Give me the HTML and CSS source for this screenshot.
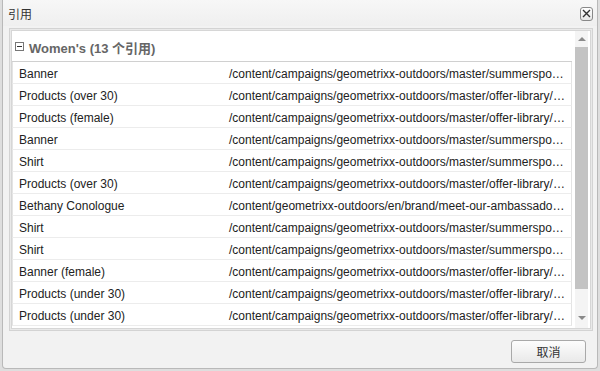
FILE: index.html
```html
<!DOCTYPE html>
<html lang="zh">
<head>
  <meta charset="UTF-8">
  <title>引用</title>
  <link rel="stylesheet" href="styles.css">
</head>
<body>
  <div class="dialog">
    <div class="dialog-header">
      <span class="dialog-title">引用</span>
      <button class="close-btn" aria-label="close">
        <svg width="9" height="9" viewBox="0 0 9 9"><path d="M1 1L8 8M8 1L1 8" stroke="#333" stroke-width="1.4"/></svg>
      </button>
    </div>
    <div class="dialog-body">
      <div class="panel">
        <div class="grid">
          <div class="rows">
            <div class="group-header">
              <span class="toggle"></span>
              <span>Women's (13 个引用)</span>
            </div>
            <div class="row"><span class="col-title">Banner</span><span class="col-path">/content/campaigns/geometrixx-outdoors/master/summersport-collection/banner</span></div>
            <div class="row"><span class="col-title">Products (over 30)</span><span class="col-path">/content/campaigns/geometrixx-outdoors/master/offer-library/products-over-30</span></div>
            <div class="row"><span class="col-title">Products (female)</span><span class="col-path">/content/campaigns/geometrixx-outdoors/master/offer-library/products-female</span></div>
            <div class="row"><span class="col-title">Banner</span><span class="col-path">/content/campaigns/geometrixx-outdoors/master/summersport-collection/banner-2</span></div>
            <div class="row"><span class="col-title">Shirt</span><span class="col-path">/content/campaigns/geometrixx-outdoors/master/summersport-collection/shirt</span></div>
            <div class="row"><span class="col-title">Products (over 30)</span><span class="col-path">/content/campaigns/geometrixx-outdoors/master/offer-library/products-over-30-2</span></div>
            <div class="row"><span class="col-title">Bethany Conologue</span><span class="col-path">/content/geometrixx-outdoors/en/brand/meet-our-ambassadors/bethany</span></div>
            <div class="row"><span class="col-title">Shirt</span><span class="col-path">/content/campaigns/geometrixx-outdoors/master/summersport-collection/shirt-2</span></div>
            <div class="row"><span class="col-title">Shirt</span><span class="col-path">/content/campaigns/geometrixx-outdoors/master/summersport-collection/shirt-3</span></div>
            <div class="row"><span class="col-title">Banner (female)</span><span class="col-path">/content/campaigns/geometrixx-outdoors/master/offer-library/banner-female</span></div>
            <div class="row"><span class="col-title">Products (under 30)</span><span class="col-path">/content/campaigns/geometrixx-outdoors/master/offer-library/products-under-30</span></div>
            <div class="row"><span class="col-title">Products (under 30)</span><span class="col-path">/content/campaigns/geometrixx-outdoors/master/offer-library/products-under-30-2</span></div>
          </div>
          <div class="scrollbar">
            <span class="arrow-up"></span>
            <span class="thumb"></span>
            <span class="track"></span>
            <span class="arrow-down"></span>
          </div>
        </div>
      </div>
      <div class="dialog-footer">
        <button class="cancel-btn">取消</button>
      </div>
    </div>
  </div>
</body>
</html>
```

FILE: styles.css
```css
html, body {
  height: 100%;
}
body {
  margin: 0;
  background-color: #dedede;
  font-family: "Liberation Sans", Arial, "Noto Sans CJK SC", sans-serif;
  font-size: 12px;
  color: #333;
  overflow: hidden;
}
.dialog {
  box-sizing: border-box;
  margin-left: 2px;
  width: 596px;
  height: 369px;
  background-color: #f2f2f2;
  border: 1px solid #b9b9b9;
  border-top: none;
  border-radius: 0 0 4px 4px;
  display: flex;
  flex-direction: column;
}
.dialog-header {
  height: 26px;
  display: flex;
  align-items: center;
  justify-content: space-between;
  padding: 0 4px 0 5px;
  background: linear-gradient(#f7f7f7, #efefef);
}
.dialog-title {
  font-family: "Noto Sans CJK SC", sans-serif;
  font-size: 12px;
  color: #333;
}
.close-btn {
  width: 13px;
  height: 14px;
  padding: 0;
  margin-top: 1px;
  border: 1px solid #888;
  border-radius: 3px;
  background: linear-gradient(#ffffff, #e6e6e6);
  display: flex;
  align-items: center;
  justify-content: center;
}
.dialog-body {
  flex: 1;
  padding: 2px 4px 0 6px;
  display: flex;
  flex-direction: column;
}
.panel {
  height: 299px;
  border: 1px solid #d3d3d3;
  padding: 1px;
  background-color: #e9e9e9;
}
.grid {
  height: 100%;
  box-sizing: border-box;
  border: 1px solid #d6d6d6;
  background-color: white;
  display: flex;
}
.rows {
  flex: 1;
  min-width: 0;
  margin-right: 3px;
  overflow: hidden;
}
.group-header {
  height: 28px;
  padding: 2px 0 0 3px;
  display: flex;
  align-items: center;
  gap: 5px;
  border-bottom: 1px solid #d0d0d0;
  font-size: 13px;
  font-weight: bold;
  color: #666;
}
.toggle {
  width: 7px;
  height: 7px;
  border: 1px solid #777;
  position: relative;
  margin-top: -1px;
}
.toggle::after {
  content: "";
  position: absolute;
  left: 1px;
  right: 1px;
  top: 3px;
  height: 1px;
  background-color: #333;
}
.row {
  height: 19px;
  padding-top: 2px;
  display: flex;
  align-items: center;
  border-bottom: 1px solid #ececec;
  border-left: 1px solid #e4e4e4;
  border-right: 1px solid #e4e4e4;
  color: #222;
}
.col-title {
  width: 210px;
  flex-shrink: 0;
  padding-left: 6px;
  box-sizing: border-box;
  white-space: nowrap;
}
.col-path {
  flex: 1;
  min-width: 0;
  padding: 0 4px 0 6px;
  white-space: nowrap;
  overflow: hidden;
  text-overflow: ellipsis;
}
.scrollbar {
  width: 13px;
  margin-right: 2px;
  display: flex;
  flex-direction: column;
  align-items: center;
  background-color: #f4f4f4;
}
.arrow-up, .arrow-down {
  width: 0;
  height: 0;
  border-left: 4px solid transparent;
  border-right: 4px solid transparent;
}
.arrow-up {
  border-bottom: 4px solid #8a8a8a;
  margin: 6px 0 6px;
}
.arrow-down {
  border-top: 4px solid #8a8a8a;
  margin: 0 0 8px;
}
.thumb {
  width: 13px;
  height: 242px;
  background-color: #c3c3c3;
}
.track {
  flex: 1;
}
.dialog-footer {
  display: flex;
  justify-content: flex-end;
  padding: 9px 7px 0 0;
}
.cancel-btn {
  width: 75px;
  height: 23px;
  border: 1px solid #a9a9a9;
  border-radius: 3px;
  background: linear-gradient(#fdfdfd, #e9e9e9);
  font-family: "Noto Sans CJK SC", sans-serif;
  font-size: 12px;
  color: #333;
}
```
